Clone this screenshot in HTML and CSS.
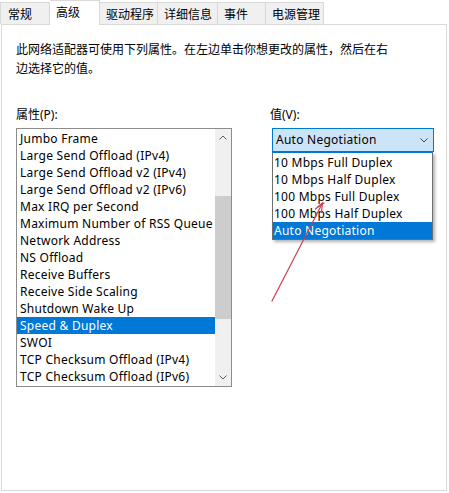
FILE: index.html
```html
<!DOCTYPE html>
<html lang="zh-CN">
<head>
<meta charset="utf-8">
<title>高级</title>
<link rel="stylesheet" href="styles.css">
</head>
<body>
<div class="window">
  <div class="tabs">
    <div class="tab tab-first w50">常规</div>
    <div class="tab tab-active w50">高级</div>
    <div class="tab w58">驱动程序</div>
    <div class="tab w60">详细信息</div>
    <div class="tab w48">事件</div>
    <div class="tab w58">电源管理</div>
  </div>
  <div class="panel">
    <p class="desc">此网络适配器可使用下列属性。在左边单击你想更改的属性，然后在右<br>边选择它的值。</p>
    <div class="fields">
      <div class="col-left">
        <div class="label">属性(P):</div>
        <div class="listbox">
          <ul class="items">
            <li>Jumbo Frame</li>
            <li>Large Send Offload (IPv4)</li>
            <li>Large Send Offload v2 (IPv4)</li>
            <li>Large Send Offload v2 (IPv6)</li>
            <li>Max IRQ per Second</li>
            <li>Maximum Number of RSS Queue</li>
            <li>Network Address</li>
            <li>NS Offload</li>
            <li>Receive Buffers</li>
            <li>Receive Side Scaling</li>
            <li>Shutdown Wake Up</li>
            <li class="selected">Speed &amp; Duplex</li>
            <li>SWOI</li>
            <li>TCP Checksum Offload (IPv4)</li>
            <li>TCP Checksum Offload (IPv6)</li>
          </ul>
          <div class="scrollbar">
            <div class="sb-btn">
              <svg width="8" height="5" viewBox="0 0 8 5"><polyline points="0.5,4.5 4,1 7.5,4.5" fill="none" stroke="#606060" stroke-width="1"/></svg>
            </div>
            <div class="track"><div class="thumb"></div></div>
            <div class="sb-btn">
              <svg width="8" height="5" viewBox="0 0 8 5"><polyline points="0.5,0.5 4,4 7.5,0.5" fill="none" stroke="#606060" stroke-width="1"/></svg>
            </div>
          </div>
        </div>
      </div>
      <div class="col-right">
        <div class="label label-v">值(V):</div>
        <div class="combo">
          <span>Auto Negotiation</span>
          <svg width="8" height="5" viewBox="0 0 8 5"><polyline points="0.5,0.5 4,4 7.5,0.5" fill="none" stroke="#505050" stroke-width="1"/></svg>
          <ul class="dropdown">
            <li>10 Mbps Full Duplex</li>
            <li>10 Mbps Half Duplex</li>
            <li>100 Mbps Full Duplex</li>
            <li>100 Mbps Half Duplex</li>
            <li class="selected">Auto Negotiation</li>
          </ul>
        </div>
      </div>
    </div>
  </div>
  <svg class="annotation" width="449" height="493" viewBox="0 0 449 493">
    <g fill="none" stroke="#cf3c56" stroke-width="1.2" stroke-linecap="round">
      <line x1="272" y1="301" x2="322" y2="204"/>
      <polyline points="315.5,209 322.5,203 321.5,212.5"/>
      <line x1="318" y1="207" x2="324" y2="203"/>
    </g>
  </svg>
</div>
</body>
</html>
```
FILE: styles.css
```css
body {
  margin: 0;
  background: #fff;
  font-family: "Noto Sans", "Noto Sans CJK SC", sans-serif;
  font-size: 12px;
  color: #000;
}

.window {
  position: relative;
  width: 449px;
  height: 493px;
  overflow: hidden;
}

.tabs {
  display: flex;
  align-items: flex-end;
  height: 24px;
}

.tab {
  box-sizing: border-box;
  height: 22px;
  line-height: 21px;
  padding-left: 6px;
  background: #f0f0f0;
  border-top: 1px solid #d9d9d9;
  border-right: 1px solid #d9d9d9;
  white-space: nowrap;
  font-family: "Noto Sans CJK SC", sans-serif;
}

.tab-first {
  border-left: 1px solid #d9d9d9;
  padding-left: 7px;
}

.tab-active {
  height: 25px;
  margin-bottom: -1px;
  line-height: 22px;
  background: #fff;
  position: relative;
  z-index: 1;
}

.w48 { width: 48px; }
.w50 { width: 50px; }
.w58 { width: 58px; }
.w60 { width: 60px; }

.panel {
  box-sizing: border-box;
  margin-left: 1px;
  width: 446px;
  height: 467px;
  border: 1px solid #d9d9d9;
  padding: 14px 14px 0 14px;
}

.desc {
  margin: 0;
  line-height: 19px;
  font-family: "Noto Sans CJK SC", sans-serif;
}

.fields {
  display: flex;
  margin-top: 29px;
}

.label {
  height: 18px;
  line-height: 18px;
  margin-bottom: 4px;
}

.label-v {
  margin-left: -2px;
}

.col-left {
  width: 216px;
}

.col-right {
  margin-left: 40px;
}

.listbox {
  box-sizing: border-box;
  width: 216px;
  height: 259px;
  border: 1px solid #8c8c8c;
  display: flex;
}

.items {
  list-style: none;
  margin: 0;
  padding: 1px 0 0 0;
  flex: 1;
  min-width: 0;
  letter-spacing: 0.25px;
}

.items li {
  height: 17px;
  line-height: 17px;
  padding-left: 3px;
  white-space: nowrap;
  overflow: hidden;
}

.selected {
  background: #0078d7;
  color: #fff;
}

.scrollbar {
  width: 16px;
  background: #f0f0f0;
  display: flex;
  flex-direction: column;
}

.sb-btn {
  height: 17px;
  display: flex;
  align-items: center;
  justify-content: center;
}

.track {
  flex: 1;
  padding-top: 50px;
}

.thumb {
  height: 123px;
  background: #cdcdcd;
}

.combo {
  position: relative;
  box-sizing: border-box;
  width: 162px;
  height: 24px;
  border: 1px solid #0078d7;
  background: #cce4f7;
  padding: 0 5px 0 3px;
  line-height: 22px;
  display: flex;
  justify-content: space-between;
  align-items: center;
  letter-spacing: 0.25px;
}

.dropdown {
  position: absolute;
  top: 23px;
  left: -1px;
  box-sizing: border-box;
  width: 161px;
  margin: 0;
  padding: 1px 0 0 0;
  list-style: none;
  background: #fff;
  border: 1px solid #6e6e6e;
  border-top-color: #0078d7;
  box-shadow: 2px 2px 3px rgba(0, 0, 0, 0.3);
}

.dropdown li {
  height: 17px;
  line-height: 17px;
  padding-left: 1px;
  white-space: nowrap;
}

.annotation {
  position: absolute;
  left: 0;
  top: 0;
  pointer-events: none;
}
```
